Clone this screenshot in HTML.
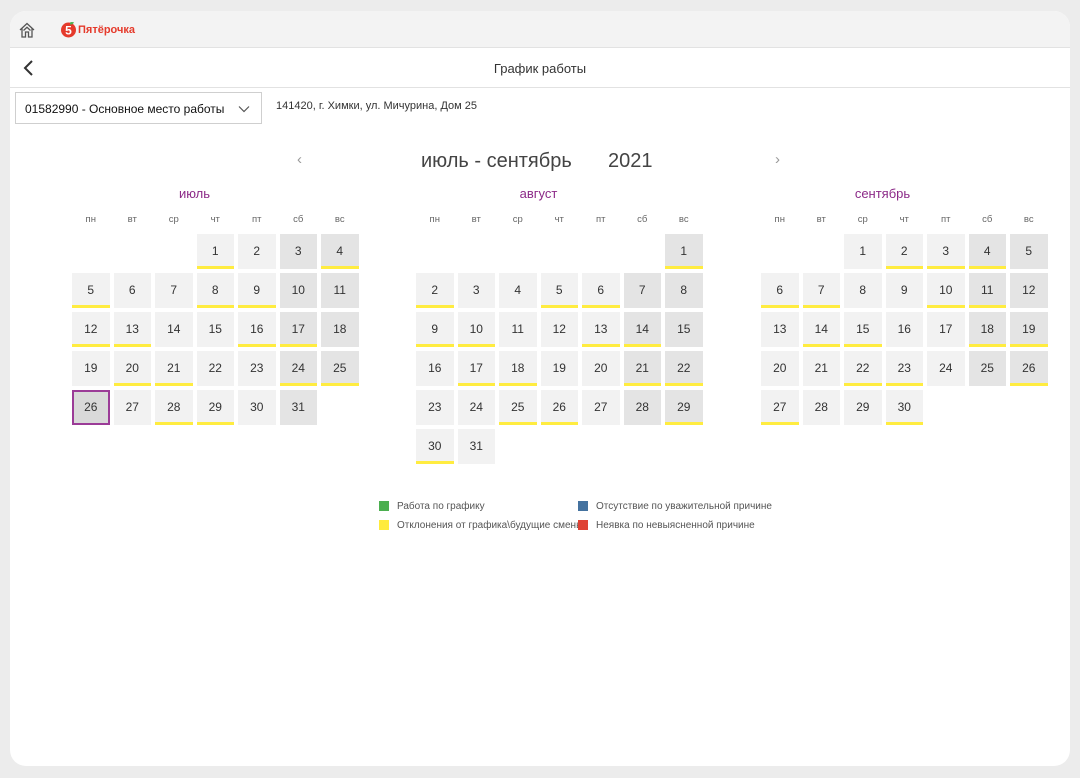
<!DOCTYPE html>
<html><head><meta charset="utf-8"><style>
*{box-sizing:border-box;margin:0;padding:0}
body{width:1080px;height:778px;background:#ececec;font-family:"Liberation Sans",Arial,sans-serif;position:relative;overflow:hidden}
.card{position:absolute;left:10px;top:11px;width:1060px;height:755px;background:#fff;border-radius:16px;overflow:hidden}
.top{position:absolute;left:0;top:0;width:100%;height:37px;background:#f3f3f3;border-bottom:1px solid #e2e2e2}
.tb{position:absolute;left:0;top:37px;width:100%;height:40px;border-bottom:1px solid #e2e2e2}
.abs{position:absolute}
.sel{left:5px;top:81px;width:247px;height:32px;border:1px solid #cfcfcf;font-size:12px;color:#111;padding:9px 0 0 9px}
.cal{position:absolute;top:226px;display:grid;grid-template-columns:repeat(7,37.5px);column-gap:4px;row-gap:4px}
.cal div{height:35px;background:#f2f2f2;font-size:12px;color:#333;text-align:center;line-height:35px}
.cal .w{background:#e4e4e4}
.cal .y{box-shadow:inset 0 -3px #ffec40}
.cal .e{background:none}
.cal .s{background:#d9d9d9;border:2px solid #9b3b97;line-height:31px}
.mn{position:absolute;top:186px;width:285px;text-align:center;font-size:13px;color:#8c2a88}
.wd{position:absolute;top:214px;display:grid;grid-template-columns:repeat(7,37.5px);column-gap:4px;font-size:9.5px;color:#666;text-align:center}
.lg{position:absolute;font-size:10px;color:#555}
.lg i{position:absolute;left:-18px;top:0;width:10px;height:10px}
</style></head><body>
<div class="card">
<div class="top">
<svg class="abs" style="left:8px;top:10px" width="18" height="18" viewBox="0 0 18 18" fill="none" stroke="#555" stroke-width="1.3"><path d="M2 9L9 2.5L16 9M4 7.5V16H7.5V11H10.5V16H14V7.5"/><path d="M5.5 9.5L9 6.3L12.5 9.5"/></svg>
<svg class="abs" style="left:50px;top:10px" width="17" height="17" viewBox="0 0 17 17"><circle cx="8.5" cy="9" r="7.5" fill="#e53a2b"/><path d="M10 1.5c2-1 4 0 4 0-1 2-3 2-4 2z" fill="#4caf50"/><text x="8.5" y="13.5" font-size="12" font-weight="bold" fill="#fff" text-anchor="middle" font-family="Liberation Sans">5</text></svg>
<div class="abs" style="left:68px;top:13px;font-size:11px;font-weight:bold;color:#e53a2b">Пятёрочка</div>
</div>
<div class="tb">
<svg class="abs" style="left:12px;top:11px" width="14" height="18" viewBox="0 0 14 18" fill="none" stroke="#333" stroke-width="2"><path d="M10 2L3 9L10 16"/></svg>
<div class="abs" style="left:0;width:100%;top:13px;text-align:center;font-size:13px;color:#333">График работы</div>
</div>
<div class="abs sel">01582990 - Основное место работы
<svg class="abs" style="left:222px;top:12px" width="12" height="8" viewBox="0 0 12 8" fill="none" stroke="#555" stroke-width="1.2"><path d="M1 1.5L6 6.5L11 1.5"/></svg></div>
<div class="abs" style="left:266px;top:89px;font-size:11px;color:#333">141420, г. Химки, ул. Мичурина, Дом 25</div>
</div>

<div class="abs" style="left:297px;top:151px;font-size:15px;color:#999">‹</div>
<div class="abs" style="left:775px;top:151px;font-size:15px;color:#999">›</div>
<div class="abs" style="left:421px;top:150px;font-size:20px;color:#444">июль - сентябрь</div>
<div class="abs" style="left:608px;top:150px;font-size:20px;color:#444">2021</div>

<div class="mn" style="left:52px">июль</div>
<div class="mn" style="left:396px">август</div>
<div class="mn" style="left:740px">сентябрь</div>

<div class="wd" style="left:72px"><span>пн</span><span>вт</span><span>ср</span><span>чт</span><span>пт</span><span>сб</span><span>вс</span></div>
<div class="wd" style="left:416px"><span>пн</span><span>вт</span><span>ср</span><span>чт</span><span>пт</span><span>сб</span><span>вс</span></div>
<div class="wd" style="left:761px"><span>пн</span><span>вт</span><span>ср</span><span>чт</span><span>пт</span><span>сб</span><span>вс</span></div>

<div class="cal" style="left:72px;top:234px">
<div class="e"></div><div class="e"></div><div class="e"></div><div class="y">1</div><div>2</div><div class="w">3</div><div class="w y">4</div>
<div class="y">5</div><div>6</div><div>7</div><div class="y">8</div><div class="y">9</div><div class="w">10</div><div class="w">11</div>
<div class="y">12</div><div class="y">13</div><div>14</div><div>15</div><div class="y">16</div><div class="w y">17</div><div class="w">18</div>
<div>19</div><div class="y">20</div><div class="y">21</div><div>22</div><div>23</div><div class="w y">24</div><div class="w y">25</div>
<div class="s">26</div><div>27</div><div class="y">28</div><div class="y">29</div><div>30</div><div class="w">31</div><div class="e"></div>
</div>

<div class="cal" style="left:416px;top:234px">
<div class="e"></div><div class="e"></div><div class="e"></div><div class="e"></div><div class="e"></div><div class="e"></div><div class="w y">1</div>
<div class="y">2</div><div>3</div><div>4</div><div class="y">5</div><div class="y">6</div><div class="w">7</div><div class="w">8</div>
<div class="y">9</div><div class="y">10</div><div>11</div><div>12</div><div class="y">13</div><div class="w y">14</div><div class="w">15</div>
<div>16</div><div class="y">17</div><div class="y">18</div><div>19</div><div>20</div><div class="w y">21</div><div class="w y">22</div>
<div>23</div><div>24</div><div class="y">25</div><div class="y">26</div><div>27</div><div class="w">28</div><div class="w y">29</div>
<div class="y">30</div><div>31</div><div class="e"></div><div class="e"></div><div class="e"></div><div class="e"></div><div class="e"></div>
</div>

<div class="cal" style="left:761px;top:234px">
<div class="e"></div><div class="e"></div><div>1</div><div class="y">2</div><div class="y">3</div><div class="w y">4</div><div class="w">5</div>
<div class="y">6</div><div class="y">7</div><div>8</div><div>9</div><div class="y">10</div><div class="w y">11</div><div class="w">12</div>
<div>13</div><div class="y">14</div><div class="y">15</div><div>16</div><div>17</div><div class="w y">18</div><div class="w y">19</div>
<div>20</div><div>21</div><div class="y">22</div><div class="y">23</div><div>24</div><div class="w">25</div><div class="w y">26</div>
<div class="y">27</div><div>28</div><div>29</div><div class="y">30</div><div class="e"></div><div class="e"></div><div class="e"></div>
</div>

<div class="lg" style="left:397px;top:501px"><i style="background:#4caf50"></i>Работа по графику</div>
<div class="lg" style="left:397px;top:520px"><i style="background:#ffeb3b"></i>Отклонения от графика\будущие смены</div>
<div class="lg" style="left:596px;top:501px"><i style="background:#44729f"></i>Отсутствие по уважительной причине</div>
<div class="lg" style="left:596px;top:520px"><i style="background:#df4335"></i>Неявка по невыясненной причине</div>
</body></html>
